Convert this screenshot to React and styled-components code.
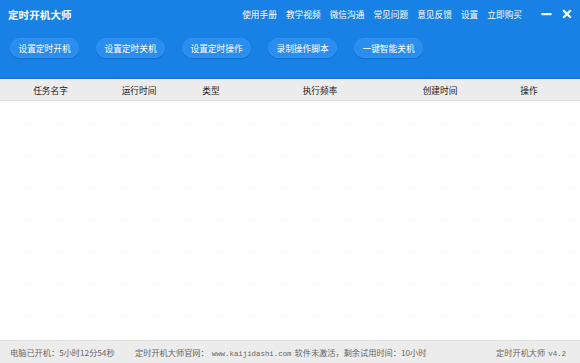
import React from "react";
import styled, { createGlobalStyle } from "styled-components";

const Global = createGlobalStyle`
  html, body { margin: 0; padding: 0; background: #fff; }
  body { font-family: "Noto Sans CJK SC", "Noto Sans", sans-serif; }
  * { box-sizing: border-box; }
`;

const Window = styled.div`
  width: 580px;
  height: 363px;
  display: flex;
  flex-direction: column;
  background: #fff;
  overflow: hidden;
`;

const Header = styled.header`
  height: 79px;
  background: #1781e6;
  border-bottom: 1px solid #0e6cd0;
  display: flex;
  flex-direction: column;
`;

const TitleBar = styled.div`
  height: 28px;
  display: flex;
  align-items: center;
  padding: 0 8px 0 8px;
`;

const Title = styled.div`
  color: #fff;
  font-size: 10.5px;
  font-weight: 700;
  letter-spacing: 0.1px;
  flex: 1;
`;

const Menu = styled.nav`
  display: flex;
  align-items: center;
  gap: 9px;
  margin-right: 19px;
`;

const MenuItem = styled.span`
  color: #fff;
  font-size: 8.7px;
  white-space: nowrap;
`;

const WinButtons = styled.div`
  display: flex;
  align-items: center;
  gap: 10px;
`;

const WinIcon = styled.svg`
  display: block;
`;

const Toolbar = styled.div`
  display: flex;
  align-items: center;
  gap: 17px;
  padding: 10px 10px 0 10px;
`;

const ToolButton = styled.button`
  width: 69px;
  height: 20px;
  border-radius: 10px;
  border: 1px solid #3495f0;
  background: #2a8ef0;
  box-shadow: 0 1px 1px rgba(0, 60, 140, 0.25);
  color: #fff;
  font-family: inherit;
  font-size: 8.7px;
  padding: 0;
  white-space: nowrap;
`;

const Separator = styled.div`
  height: 1px;
  background: #f4f4f4;
`;

const TableHead = styled.div`
  height: 21px;
  display: grid;
  grid-template-columns: 101px 76px 68px 150px 90px 88px 1fr;
  align-items: center;
  background: #ececec;
  border-bottom: 1px solid #e0e0e0;
`;

const HeadCell = styled.div`
  text-align: center;
  font-size: 8.7px;
  color: #222;
`;

const Body = styled.div`
  flex: 1;
  background-color: #fff;
  background-image:
    linear-gradient(to right, rgba(0, 0, 0, 0.012) 1px, transparent 1px),
    linear-gradient(to bottom, rgba(0, 0, 0, 0.01) 1px, transparent 1px);
  background-size: 32px 32px;
  background-position: -4px 22px;
`;

const StatusBar = styled.footer`
  height: 23px;
  background: #ececec;
  border-top: 1px solid #e2e2e2;
  display: flex;
  align-items: center;
  padding: 0 11px 0 10px;
  color: #666;
  font-size: 8.2px;
  white-space: nowrap;
`;

const StatusLeft = styled.span`
  width: 125px;
`;

const StatusMid = styled.span`
  flex: 1;
`;

const Mono = styled.span`
  font-family: "Liberation Mono", "DejaVu Sans Mono", monospace;
  font-size: 7.4px;
  margin: 0 3px;
`;

const menu = ["使用手册", "教学视频", "微信沟通", "常见问题", "意见反馈", "设置", "立即购买"];
const buttons = ["设置定时开机", "设置定时关机", "设置定时操作", "录制操作脚本", "一键智能关机"];
const cols = ["任务名字", "运行时间", "类型", "执行频率", "创建时间", "操作", ""];

export default function App() {
  return (
    <>
      <Global />
      <Window>
        <Header>
          <TitleBar>
            <Title>定时开机大师</Title>
            <Menu>
              {menu.map((m) => (
                <MenuItem key={m}>{m}</MenuItem>
              ))}
            </Menu>
            <WinButtons>
              <WinIcon width="11" height="10" viewBox="0 0 11 10">
                <rect x="0.5" y="4" width="10" height="2.2" fill="#fff" />
              </WinIcon>
              <WinIcon width="10" height="10" viewBox="0 0 10 10">
                <path d="M1.2 1.2 L8.8 8.8 M8.8 1.2 L1.2 8.8" stroke="#fff" strokeWidth="2.1" />
              </WinIcon>
            </WinButtons>
          </TitleBar>
          <Toolbar>
            {buttons.map((b) => (
              <ToolButton key={b}>{b}</ToolButton>
            ))}
          </Toolbar>
        </Header>
        <Separator />
        <TableHead>
          {cols.map((c, i) => (
            <HeadCell key={i}>{c}</HeadCell>
          ))}
        </TableHead>
        <Body />
        <StatusBar>
          <StatusLeft>电脑已开机：5小时12分54秒</StatusLeft>
          <StatusMid>
            定时开机大师官网：<Mono>www.kaijidashi.com</Mono>软件未激活，剩余试用时间：10小时
          </StatusMid>
          <span>
            定时开机大师<Mono>v4.2</Mono>
          </span>
        </StatusBar>
      </Window>
    </>
  );
}
